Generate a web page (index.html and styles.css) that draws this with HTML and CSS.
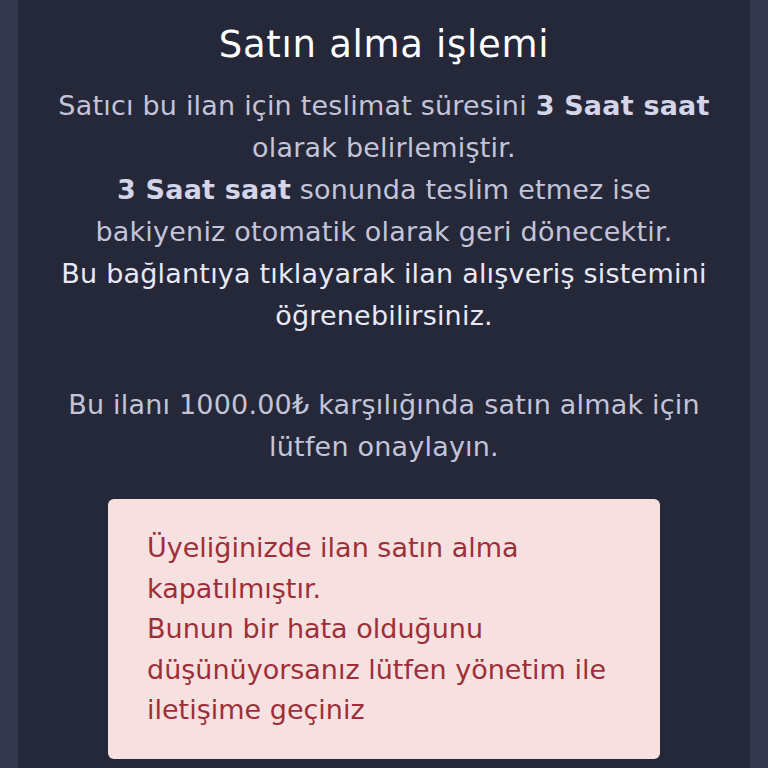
FILE: index.html
```html
<!DOCTYPE html>
<html lang="tr">
<head>
<meta charset="utf-8">
<title>Satın alma işlemi</title>
<link rel="stylesheet" href="styles.css">
</head>
<body>
<div class="modal">
  <h2 class="modal-title">Satın alma işlemi</h2>
  <div class="modal-body">
    <p class="info">
      Satıcı bu ilan için teslimat süresini <strong>3 Saat saat</strong> olarak belirlemiştir.<br>
      <strong>3 Saat saat</strong> sonunda teslim etmez ise bakiyeniz otomatik olarak geri dönecektir.<br>
      <a class="guide-link" href="#">Bu bağlantıya tıklayarak ilan alışveriş sistemini öğrenebilirsiniz.</a>
    </p>
    <p class="info confirm">Bu ilanı 1000.00₺ karşılığında satın almak için lütfen onaylayın.</p>
    <div class="alert">
      Üyeliğinizde ilan satın alma kapatılmıştır.<br>
      Bunun bir hata olduğunu düşünüyorsanız lütfen yönetim ile iletişime geçiniz
    </div>
  </div>
</div>
</body>
</html>
```
FILE: styles.css
```css
html, body {
  margin: 0;
  height: 100%;
}

body {
  background: #35374e;
  font-family: "DejaVu Sans", "Noto Sans", sans-serif;
  overflow: hidden;
}

.modal {
  margin: 0 18px;
  min-height: 100%;
  background: #252839;
  padding: 22px 0 0;
  box-sizing: border-box;
}

.modal-title {
  margin: 0;
  text-align: center;
  color: #ffffff;
  font-weight: 400;
  font-size: 37px;
  letter-spacing: 0.7px;
  line-height: 46px;
}

.modal-body {
  padding: 0 35px;
}

.info {
  margin: 17px 0 0;
  text-align: center;
  color: #c3c4da;
  font-size: 27px;
  letter-spacing: 0.2px;
  line-height: 42px;
}

.info.confirm {
  margin-top: 47px;
}

.info strong {
  color: #d4d5e8;
  font-weight: 700;
}

.guide-link {
  color: #e8e8f6;
  text-decoration: none;
}

.alert {
  margin: 31px 55px 0;
  padding: 29px 39px 28px;
  background: #f6e1e0;
  color: #9e2f38;
  border-radius: 6px;
  font-size: 27px;
  line-height: 40.5px;
}
```
